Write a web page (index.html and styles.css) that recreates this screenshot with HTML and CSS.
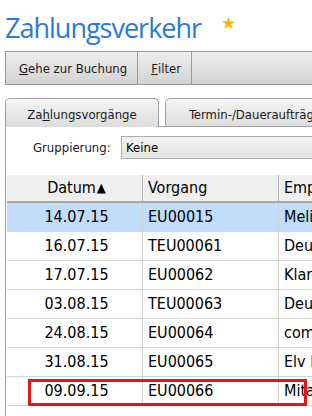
FILE: index.html
```html
<!DOCTYPE html>
<html lang="de">
<head>
<meta charset="utf-8">
<title>Zahlungsverkehr</title>
<link rel="stylesheet" href="styles.css">
</head>
<body>
<div class="page">
  <h1 class="title">Zahlungsverkehr <span class="star">★</span></h1>
  <div class="toolbar">
    <div class="tbtn"><u>G</u>ehe zur Buchung</div>
    <div class="tbtn"><u>F</u>ilter</div>
    <div class="tfill"></div>
  </div>
  <div class="tabs">
    <div class="tab active">Za<u>h</u>lungsvorgänge</div>
    <div class="tab">Termin-/Daueraufträge</div>
    <div class="tabrest"></div>
  </div>
  <div class="panel">
    <div class="group">
      <span class="glabel">Gruppierung:</span>
      <div class="select">Keine</div>
    </div>
    <div class="grid">
      <div class="row head">
        <div class="c1">Datum<span class="sort">▲</span></div>
        <div class="c2">Vorgang</div>
        <div class="c3">Empfänger</div>
      </div>
      <div class="row sel">
        <div class="c1">14.07.15</div><div class="c2">EU00015</div><div class="c3">Melissa Schneider</div>
      </div>
      <div class="row">
        <div class="c1">16.07.15</div><div class="c2">TEU00061</div><div class="c3">Deutsche Telekom</div>
      </div>
      <div class="row">
        <div class="c1">17.07.15</div><div class="c2">EU00062</div><div class="c3">Klarmobil GmbH</div>
      </div>
      <div class="row">
        <div class="c1">03.08.15</div><div class="c2">TEU00063</div><div class="c3">Deutsche Post</div>
      </div>
      <div class="row">
        <div class="c1">24.08.15</div><div class="c2">EU00064</div><div class="c3">comdirect bank</div>
      </div>
      <div class="row">
        <div class="c1">31.08.15</div><div class="c2">EU00065</div><div class="c3">Elv Immobilien</div>
      </div>
      <div class="row marked">
        <div class="c1">09.09.15</div><div class="c2">EU00066</div><div class="c3">Mitarbeiter</div>
        <div class="mark"></div>
      </div>
    </div>
  </div>
</div>
</body>
</html>
```
FILE: styles.css
```css
html, body {
  margin: 0;
  padding: 0;
  background: #ffffff;
}
.page {
  width: 312px;
  height: 416px;
  overflow: hidden;
  padding-left: 5px;
  box-sizing: border-box;
  font-family: "DejaVu Sans Condensed", "DejaVu Sans", sans-serif;
  color: #000;
}
.title {
  margin: 0;
  height: 51px;
  box-sizing: border-box;
  padding-top: 6px;
  font-family: "Open Sans", sans-serif;
  font-weight: 400;
  font-size: 27px;
  line-height: 34px;
  letter-spacing: -1px;
  color: #2b7bd6;
  white-space: nowrap;
}
.star {
  color: #f6b700;
  font-family: "DejaVu Sans", sans-serif;
  font-size: 17px;
  vertical-align: 9px;
  margin-left: 14px;
}
.toolbar {
  display: flex;
  height: 34px;
  width: 340px;
  box-sizing: border-box;
  border: 1px solid #9a9a9a;
  background: linear-gradient(#eeeeee, #d2d2d2);
}
.tbtn {
  display: flex;
  align-items: center;
  padding: 0 10px 0 13px;
  border-right: 1px solid #9a9a9a;
  font-size: 13px;
  color: #1a1a1a;
}
.tfill { flex: 1; }
.tabs {
  display: flex;
  margin-top: 13px;
  height: 29px;
  width: 340px;
}
.tab {
  box-sizing: border-box;
  height: 29px;
  border: 1px solid #a0a0a0;
  border-bottom: none;
  border-radius: 5px 5px 0 0;
  background: linear-gradient(#f6f6f6, #dcdcdc);
  display: flex;
  align-items: center;
  justify-content: center;
  font-size: 13px;
  padding-top: 3px;
  color: #1a1a1a;
  white-space: nowrap;
}
.tab.active {
  width: 154px;
  border-bottom: none;
}
.tab:not(.active) {
  margin-left: 6px;
  width: 180px;
  border-bottom: 1px solid #a0a0a0;
}
.tabs .tabrest {
  flex: 1;
}
.tab:not(.active) ~ .tabrest {
  border-bottom: 1px solid #a0a0a0;
}
.tab.active + .tab {
  position: relative;
}
.tab.active + .tab::before {
  content: "";
  position: absolute;
  left: -7px;
  width: 6px;
  bottom: -1px;
  border-bottom: 1px solid #a0a0a0;
}
.panel {
  border-left: 1px solid #a0a0a0;
  padding-left: 1px;
  height: 300px;
}
.group {
  display: flex;
  align-items: center;
  padding-top: 9px;
  height: 23px;
}
.glabel {
  width: 88px;
  padding-left: 26px;
  font-size: 13px;
  color: #1a1a1a;
}
.select {
  flex: 1;
  height: 23px;
  box-sizing: border-box;
  border: 1px solid #ababab;
  border-right: none;
  background: linear-gradient(#f2f2f2, #e4e4e4);
  font-size: 13px;
  line-height: 21px;
  padding-left: 4px;
}
.grid {
  margin-top: 16px;
  width: 340px;
}
.row {
  display: flex;
  height: 29px;
  box-sizing: border-box;
  border-bottom: 1px solid #d5d5d5;
  font-size: 16px;
  line-height: 28px;
  position: relative;
}
.row > div {
  white-space: nowrap;
  overflow: hidden;
  box-sizing: border-box;
}
.c1 {
  width: 135px;
  text-align: center;
  padding-left: 4px;
}
.c2 {
  width: 136px;
  padding-left: 5px;
  border-left: 1px solid #d0d0d0;
}
.c3 {
  flex: 1;
  padding-left: 5px;
  border-left: 1px solid #d0d0d0;
}
.row.head {
  height: 28px;
  background: #efefef;
  border-bottom: 2px solid #a8a8a8;
  line-height: 26px;
}
.row.head .c2, .row.head .c3 {
  border-left-color: #b4b4b4;
}
.sort {
  font-size: 13px;
  margin-left: 1px;
  position: relative;
  top: -1px;
}
.row.sel {
  background: #c1ddfb;
}
.mark {
  position: absolute;
  left: 21px;
  top: 2px;
  width: 279px;
  height: 27px;
  box-sizing: border-box;
  border: 3px solid #ee1111;
}
```
